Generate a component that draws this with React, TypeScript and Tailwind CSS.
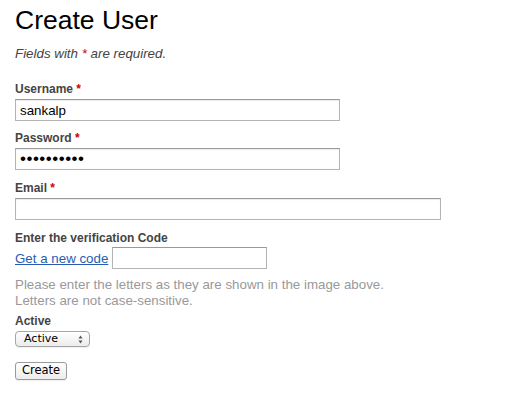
import { useState } from "react";

const Req = () => <span className="text-[#c00]"> *</span>;

function Field({
  label,
  required,
  width,
  type = "text",
  value = "",
  className = "",
}: {
  label: string;
  required?: boolean;
  width: string;
  type?: string;
  value?: string;
  className?: string;
}) {
  const [v, setV] = useState(value);
  const size = type === "password" ? "text-[17px] tracking-[0.5px]" : "text-[13.33px]";
  return (
    <div className={`flex flex-col ${className}`}>
      <label className="text-[12px] leading-[14px] font-bold text-[#444]">
        {label}
        {required && <Req />}
      </label>
      <input
        type={type}
        value={v}
        onChange={(e) => setV(e.target.value)}
        className={`mt-[3px] h-[22px] ${width} ${size} border border-[#b4b4b4] border-t-[#9a9a9a] bg-white px-[4px] text-black shadow-[inset_0_1px_1px_rgba(0,0,0,0.08)] outline-none`}
      />
    </div>
  );
}

export default function App() {
  return (
    <div className="min-h-[414px] bg-white pl-[15px] pt-[5px] font-['Liberation_Sans',Arial,sans-serif] text-[#333]">
      <h1 className="text-[26.5px] leading-[31px] text-black">Create User</h1>
      <p className="mt-[10px] text-[13.33px] leading-[15px] italic text-[#444]">
        Fields with <span className="text-[#c00]">*</span> are required.
      </p>

      <Field label="Username" required width="w-[325px]" value="sankalp" className="mt-[21px]" />
      <Field label="Password" required width="w-[325px]" type="password" value="sankalp123" className="mt-[10px]" />
      <Field label="Email" required width="w-[426px]" className="mt-[11px]" />

      <div className="mt-[11px] text-[12px] leading-[14px] font-bold text-[#444]">
        Enter the verification Code
      </div>
      <div className="mt-[2px] flex items-center gap-[4px]">
        <a href="#" className="text-[13.33px] leading-[15px] text-[#2a5db0] underline">
          Get a new code
        </a>
        <input className="h-[22px] w-[155px] border border-[#b4b4b4] border-t-[#9a9a9a] bg-white px-[4px] text-[13px] outline-none" />
      </div>
      <p className="mt-[8px] text-[13.33px] leading-[16px] text-[#999]">
        Please enter the letters as they are shown in the image above.
        <br />
        Letters are not case-sensitive.
      </p>

      <div className="mt-[5px] text-[12px] leading-[14px] font-bold text-[#444]">Active</div>
      <div className="mt-[3px] flex h-[16px] w-[75px] items-center justify-between rounded-[4px] border border-[#a5a5a5] bg-gradient-to-b from-white to-[#ececec] pl-[8px] pr-[6px] font-['DejaVu_Sans',sans-serif] text-[11px] text-black shadow-[0_1px_0_rgba(0,0,0,0.06)]">
        <span>Active</span>
        <svg width="5" height="9" viewBox="0 0 5 9" className="fill-[#555]">
          <path d="M2.5 0.5 L4.5 3.5 H0.5 Z" />
          <path d="M2.5 8.5 L4.5 5.5 H0.5 Z" />
        </svg>
      </div>

      <button className="mt-[15px] flex h-[18px] w-[52px] items-center justify-center rounded-[3px] border border-[#9a9a9a] bg-gradient-to-b from-white to-[#ececec] font-['DejaVu_Sans',sans-serif] text-[11.5px] text-black shadow-[0_1px_0_rgba(0,0,0,0.06)]">
        Create
      </button>
    </div>
  );
}
